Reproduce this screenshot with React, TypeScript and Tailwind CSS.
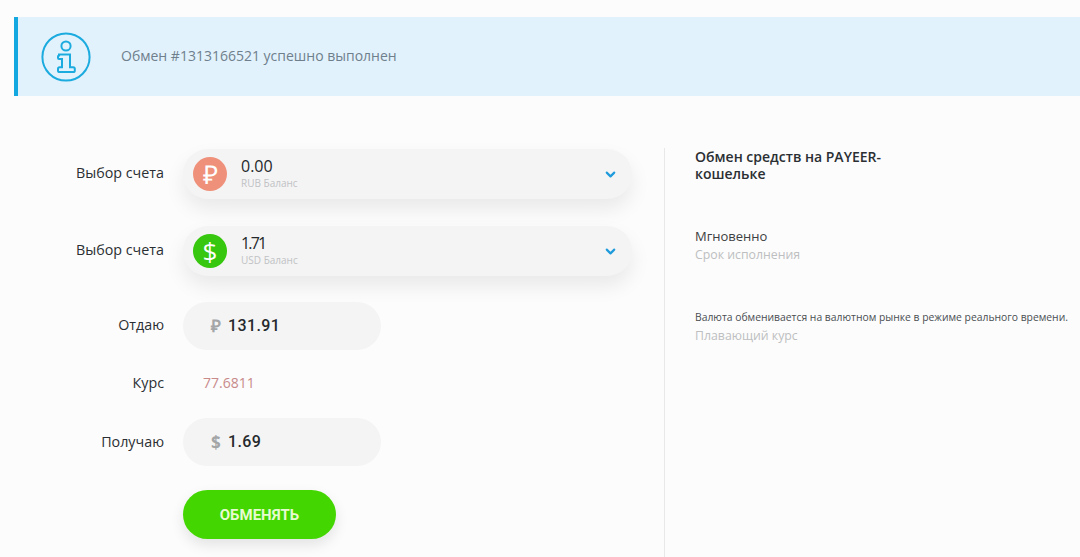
import { ChevronDown } from "lucide-react";
import type { ReactNode } from "react";

const selectShadow = "shadow-[0_10px_20px_rgba(0,0,0,0.08)]";

function Row({ label, className, children }: { label: string; className: string; children: ReactNode }) {
  return (
    <div className={`flex items-center ${className}`}>
      <span className="w-[164px] shrink-0 pb-[2px] text-right text-[14.3px] font-medium text-[#2b2f33]">{label}</span>
      <div className="ml-[19px] min-w-0 flex-1">{children}</div>
    </div>
  );
}

function AccountSelect({ amount, amountClass, hint, color, glyph }: { amount: string; amountClass: string; hint: string; color: string; glyph: ReactNode }) {
  return (
    <div className={`flex h-[50px] w-[449px] items-center rounded-[25px] bg-[#f4f4f4] pl-[10px] pr-[14px] ${selectShadow}`}>
      <div className={`flex h-[34px] w-[34px] shrink-0 items-center justify-center rounded-full ${color}`}>{glyph}</div>
      <div className="ml-[14px] flex-1 pb-[3px]">
        <div className={`text-[16px] font-medium leading-[20px] text-[#24282c] ${amountClass}`}>{amount}</div>
        <div className="mt-px text-[10px] leading-[12px] text-[#c0c2c4]">{hint}</div>
      </div>
      <ChevronDown className="h-[15px] w-[15px] text-[#1f9bdc]" strokeWidth={3.4} />
    </div>
  );
}

function AmountInput({ currency, value }: { currency: string; value: string }) {
  return (
    <div className="flex h-12 w-[198px] items-center rounded-3xl bg-[#f4f4f4] pl-[28px]">
      <span className="w-[17px] text-[17px] font-bold text-[#a3a5a7]">{currency}</span>
      <span className="text-[16px] font-medium tracking-[0.4px] text-[#26292c] [font-family:Roboto,sans-serif]">{value}</span>
    </div>
  );
}

export default function App() {
  return (
    <div className="h-[557px] w-[1080px] overflow-hidden bg-[#fcfcfc] pt-[17px] [font-family:'Open_Sans',sans-serif]">
      <div className="ml-[14px] flex h-[79px] items-center border-l-4 border-[#13a9e0] bg-[#e2f2fc] pl-[23px]">
        <svg width="50" height="50" viewBox="0 0 50 50" fill="none" stroke="#1cabdf" strokeWidth="2">
          <circle cx="25" cy="25" r="23.6" />
          <circle cx="25" cy="14" r="4.6" />
          <path d="M18 22.5h11v12.8h3.2a1.6 1.6 0 0 1 1.6 1.6v1.5a1.6 1.6 0 0 1-1.6 1.6H18.6a1.6 1.6 0 0 1-1.6-1.6v-1.5a1.6 1.6 0 0 1 1.6-1.6h2.4v-8.3h-3a1 1 0 0 1-1-1v-1.5a1 1 0 0 1 1-1z" />
        </svg>
        <span className="ml-[30px] pb-[2px] text-[14px] text-[#6f808c]">Обмен #1313166521 успешно выполнен</span>
      </div>

      <div className="flex pt-[53px]">
        <div className="w-[650px] shrink-0">
          <Row label="Выбор счета" className="">
            <AccountSelect
              amount="0.00"
              amountClass=""
              hint="RUB Баланс"
              color="bg-[#ef917a]"
              glyph={<span className="text-[26px] font-medium leading-none text-white">₽</span>}
            />
          </Row>
          <Row label="Выбор счета" className="mt-[27px]">
            <AccountSelect
              amount="1.71"
              amountClass="tracking-[-1.8px]"
              hint="USD Баланс"
              color="bg-[#36c70e]"
              glyph={<span className="text-[26px] font-medium leading-none text-white">$</span>}
            />
          </Row>
          <Row label="Отдаю" className="mt-[26px]">
            <AmountInput currency="₽" value="131.91" />
          </Row>
          <Row label="Курс" className="mt-[20px] items-baseline!">
            <span className="pl-5 text-[14px] text-[#c98a8a]">77.6811</span>
          </Row>
          <Row label="Получаю" className="mt-[23px]">
            <AmountInput currency="$" value="1.69" />
          </Row>
          <button
            type="button"
            className="ml-[183px] mt-[24px] h-[49px] w-[153px] rounded-[25px] bg-[#43d600] text-[15px] font-bold text-[#e6fbd0] shadow-[0_6px_14px_rgba(0,0,0,0.1)] [font-family:Roboto,sans-serif]"
          >
            ОБМЕНЯТЬ
          </button>
        </div>

        <div className="-mb-10 ml-[14px] mt-[-1px] flex-1 border-l border-[#e8e8e8] pl-[30px]">
          <h2 className="w-[200px] text-[14px] font-semibold leading-[17px] text-[#2b2f33]">Обмен средств на PAYEER-кошельке</h2>
          <p className="mt-[45px] text-[13px] leading-[18px] text-[#3c4043]">Мгновенно</p>
          <p className="mt-px text-[12.3px] leading-[18px] text-[#bdbfc1]">Срок исполнения</p>
          <p className="mt-[44px] whitespace-nowrap text-[10.35px] leading-[18px] text-[#4a4e52]">Валюта обменивается на валютном рынке в режиме реального времени.</p>
          <p className="mt-[1px] text-[12.3px] leading-[18px] text-[#bdbfc1]">Плавающий курс</p>
        </div>
      </div>
    </div>
  );
}
